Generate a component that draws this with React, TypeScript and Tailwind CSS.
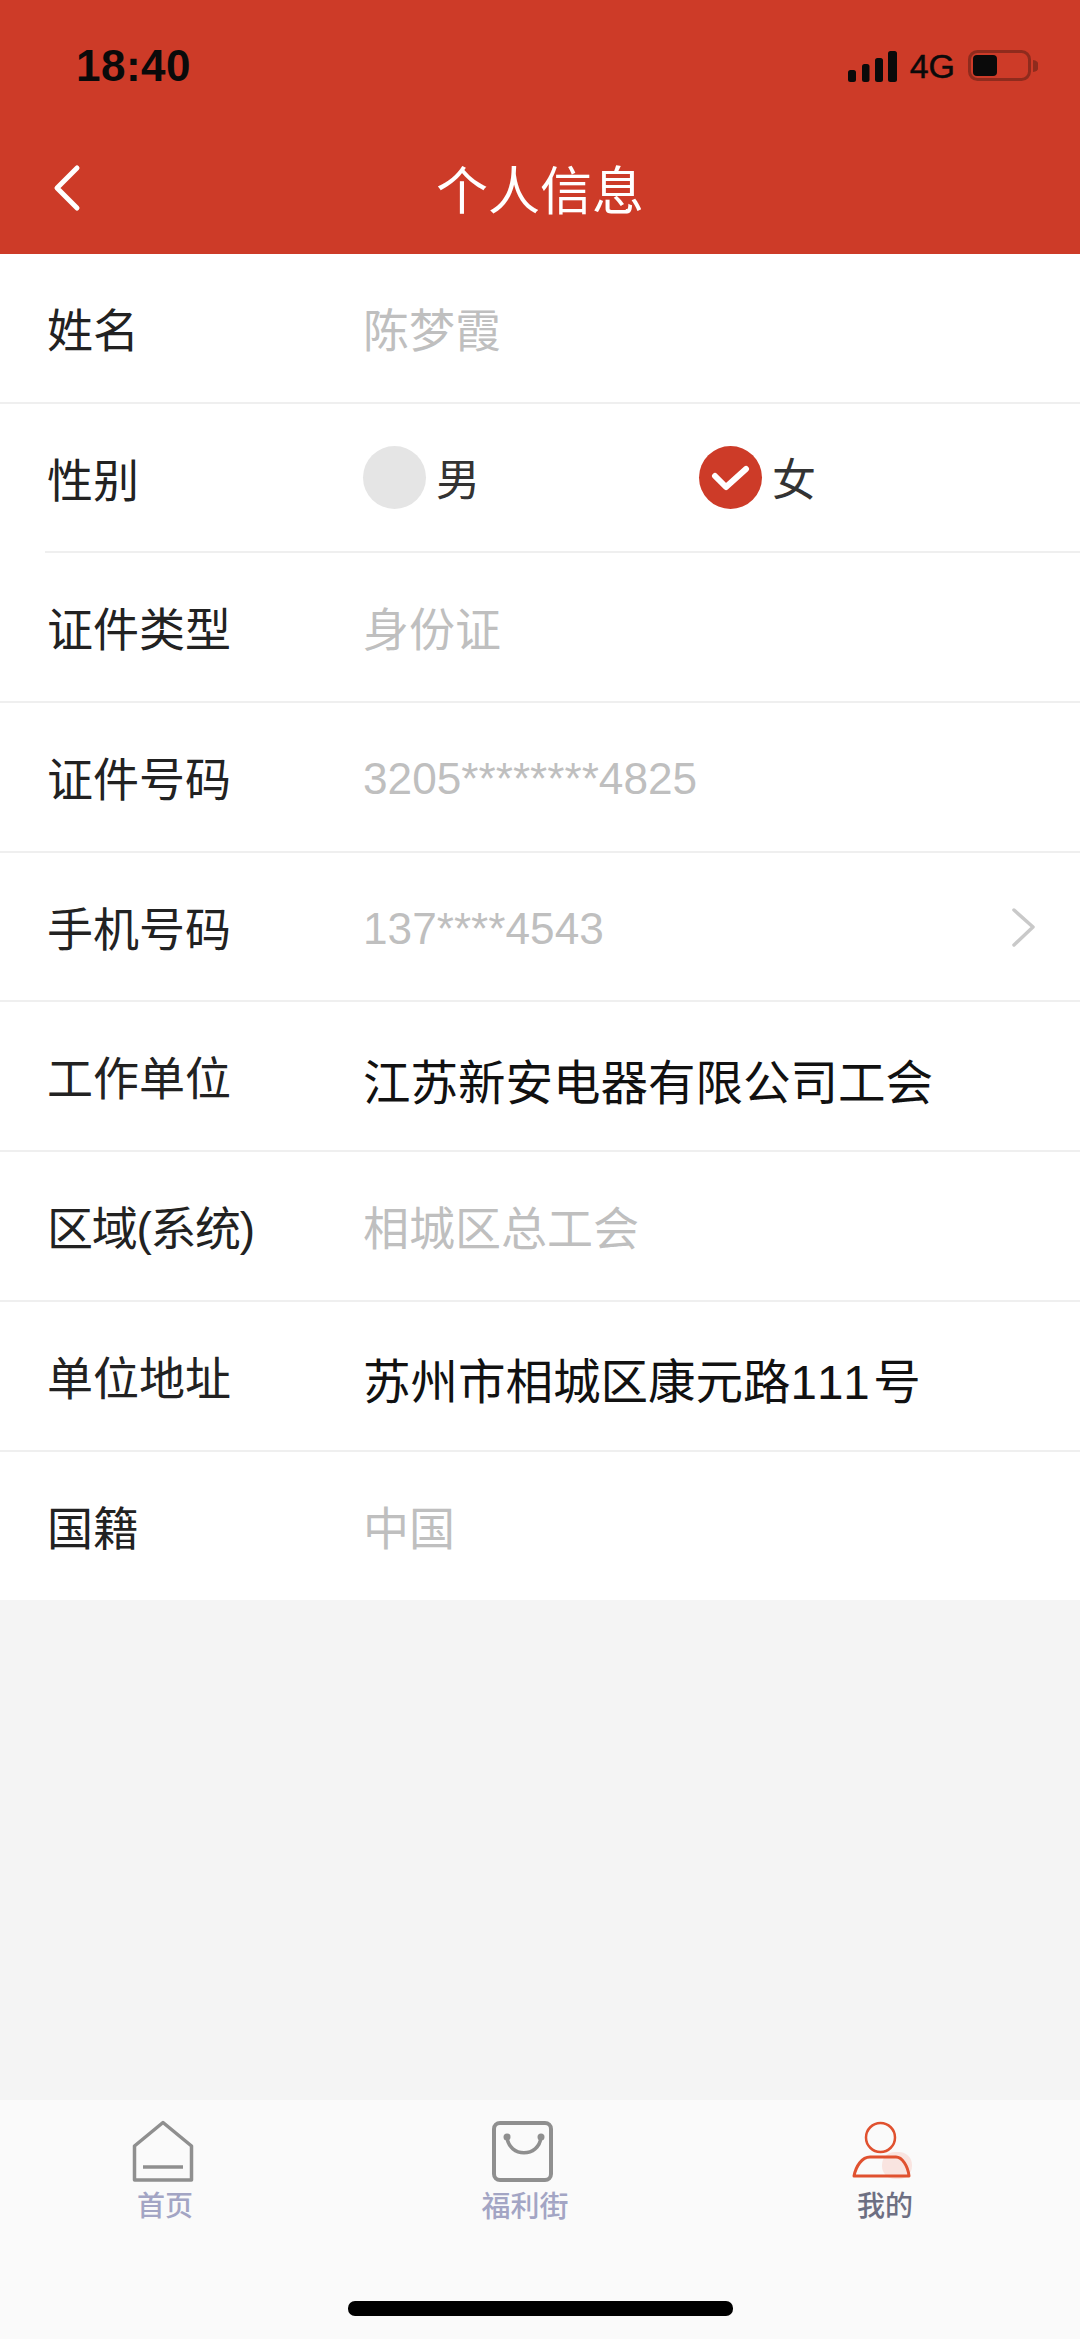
import React from "react";

const stack = { fontFamily: '"Liberation Sans","Noto Sans CJK SC",sans-serif' };

function Row({ label, children, inset, noBorder }: { label: React.ReactNode; children: React.ReactNode; inset?: boolean; noBorder?: boolean }) {
  return (
    <div className={`min-h-0 bg-white ${inset ? "pl-[45px]" : ""}`}>
      <div className={`h-full flex items-center ${inset ? "" : "pl-[47px]"} ${noBorder ? "" : "border-b-2 border-[#efefef]"}`}>
        <div className={`shrink-0 text-[46px] leading-none mt-[6px] text-[#222222] ${inset ? "pl-[2px] w-[318px]" : "w-[316px]"}`}>{label}</div>
        {children}
      </div>
    </div>
  );
}

const Grey = ({ children }: { children: React.ReactNode }) => (
  <div className="text-[46px] leading-none mt-[6px] text-[#bfbfbf]">{children}</div>
);
const GreyLatin = ({ children }: { children: React.ReactNode }) => (
  <div className="text-[44.2px] leading-none mt-[5px] text-[#bfbfbf]">{children}</div>
);
const Dark = ({ children }: { children: React.ReactNode }) => (
  <div className="text-[47.5px] leading-none text-[#111111] mt-[15px]">{children}</div>
);

export default function App() {
  return (
    <div className="w-[1080px] h-[2339px] flex flex-col bg-[#f4f4f4] overflow-hidden" style={stack}>
      <header className="h-[254px] bg-[#cd3b28] shrink-0 flex flex-col">
        <div className="h-[132px] flex items-start justify-between pt-[43px] pl-[76px] pr-[42px]">
          <span className="text-[44px] leading-[46px] font-bold tracking-[0.5px] text-[#0a0a0a]">18:40</span>
          <div className="flex items-center h-[46px]">
            <svg width="49" height="31" viewBox="0 0 49 31" fill="#0a0a0a">
              <rect x="0" y="19" width="8" height="12" rx="2.5" />
              <rect x="14" y="13" width="7.5" height="18" rx="2.5" />
              <rect x="27" y="7" width="8" height="24" rx="2.5" />
              <rect x="40" y="0" width="9" height="31" rx="2.5" />
            </svg>
            <span className="ml-[13px] text-[34px] leading-none text-[#0a0a0a] [-webkit-text-stroke:0.5px_#0a0a0a]">4G</span>
            <svg className="ml-[13px]" width="70" height="32" viewBox="0 0 70 32" fill="none">
              <rect x="1.5" y="1.5" width="60" height="28" rx="8" stroke="#8f2b1d" strokeWidth="3" />
              <rect x="5" y="5" width="24" height="21" rx="4" fill="#0a0a0a" />
              <path d="M65 10 a6 6 0 0 1 0 12 z" fill="#8f2b1d" />
            </svg>
          </div>
        </div>
        <div className="relative flex-1 flex items-start justify-center pt-[30px]">
          <svg className="absolute left-[51px] top-[31px]" width="32" height="50" viewBox="0 0 32 50" fill="none">
            <path d="M26 5 L6 25 L26 45" stroke="#ffffff" strokeWidth="5" strokeLinecap="round" strokeLinejoin="round" />
          </svg>
          <h1 className="text-[52px] leading-[60px] font-normal text-white">个人信息</h1>
        </div>
      </header>

      <main className="flex-1 flex flex-col">
        <div className="grid grid-rows-[repeat(8,149.7px)_148.4px] h-[1346px]">
          <Row label="姓名"><Grey>陈梦霞</Grey></Row>
          <Row label="性别" inset>
            <div className="flex items-center w-[336px]">
              <span className="w-[63px] h-[63px] rounded-full bg-[#e5e5e5]" />
              <span className="ml-[10px] mt-[6px] text-[44px] leading-none text-[#333333]">男</span>
            </div>
            <div className="flex items-center">
              <span className="w-[63px] h-[63px] rounded-full bg-[#cd3b28] flex items-center justify-center">
                <svg width="40" height="30" viewBox="0 0 40 30" fill="none">
                  <path d="M4 13 L15 24 L35 6" stroke="#ffffff" strokeWidth="6" strokeLinecap="round" strokeLinejoin="round" />
                </svg>
              </span>
              <span className="ml-[10px] mt-[6px] text-[44px] leading-none text-[#333333]">女</span>
            </div>
          </Row>
          <Row label="证件类型"><Grey>身份证</Grey></Row>
          <Row label="证件号码"><GreyLatin>3205********4825</GreyLatin></Row>
          <Row label="手机号码">
            <div className="flex-1 flex items-center justify-between pr-[43px]">
              <GreyLatin>137****4543</GreyLatin>
              <svg width="26" height="40" viewBox="0 0 26 40" fill="none">
                <path d="M3 3 L22 20 L3 38" stroke="#c9c9c9" strokeWidth="3.5" strokeLinecap="round" strokeLinejoin="round" />
              </svg>
            </div>
          </Row>
          <Row label="工作单位"><Dark>江苏新安电器有限公司工会</Dark></Row>
          <Row label={<span className="tracking-[-1.3px]">区域(系统)</span>}><Grey>相城区总工会</Grey></Row>
          <Row label="单位地址"><Dark>苏州市相城区康元路<span className="tracking-[3.5px]">111</span>号</Dark></Row>
          <Row label="国籍" noBorder><Grey>中国</Grey></Row>
        </div>
      </main>

      <nav className="h-[239px] shrink-0 bg-[#fafafa] flex flex-col">
        <div className="flex justify-between pl-[65px] pr-[95px] pt-[20px]">
          <div className="w-[200px] flex flex-col items-center">
            <svg className="mr-[4px]" width="62" height="63" viewBox="0 0 62 63" fill="none">
              <path d="M2.5 60 V26 L31 2.5 L59.5 26 V60 Z" stroke="#8f8f8f" strokeWidth="3.5" strokeLinejoin="round" />
              <path d="M11 47 H51" stroke="#8f8f8f" strokeWidth="3.5" />
            </svg>
            <span className="mt-[9px] text-[28px] leading-[30px] font-medium text-[#a3a5c4]">首页</span>
          </div>
          <div className="w-[200px] flex flex-col items-center">
            <svg className="mr-[4px]" width="62" height="63" viewBox="0 0 62 63" fill="none">
              <rect x="2" y="3" width="57" height="57" rx="6" stroke="#8f8f8f" strokeWidth="4" />
              <path d="M15 17 C17 38 47 38 49 17" stroke="#8f8f8f" strokeWidth="3.5" strokeLinecap="round" />
              <circle cx="15" cy="17" r="3.5" fill="#8f8f8f" />
              <circle cx="49" cy="17" r="3.5" fill="#8f8f8f" />
            </svg>
            <span className="mt-[9px] text-[29px] leading-[30px] font-medium text-[#a3a5c4]">福利街</span>
          </div>
          <div className="w-[200px] flex flex-col items-center">
            <svg className="mr-[8px]" width="62" height="63" viewBox="0 0 62 63" fill="none">
              <rect x="32" y="32" width="30" height="27" rx="13" fill="#f9e4e0" />
              <circle cx="30.5" cy="17.5" r="14.5" stroke="#e0512f" strokeWidth="2.5" />
              <path d="M4 56 C6 46 12 37 20 37 H46 C52 37 58 46 59 56 Z" stroke="#e0512f" strokeWidth="3" strokeLinejoin="round" />
            </svg>
            <span className="mt-[9px] text-[28px] leading-[30px] font-medium text-[#6d6f82]">我的</span>
          </div>
        </div>
        <div className="mt-auto mb-[23px] mx-auto w-[385px] h-[15px] rounded-[7px] bg-black" />
      </nav>
    </div>
  );
}
